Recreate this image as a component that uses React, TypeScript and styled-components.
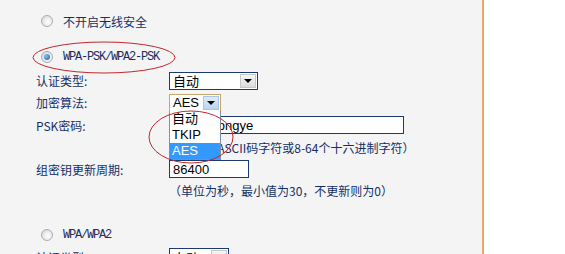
import styled, { createGlobalStyle, css } from "styled-components";

const GlobalStyle = createGlobalStyle`
    html, body {
        margin: 0;
        padding: 0;
        background: #ffffff;
    }
    body {
        font-family: "Noto Sans CJK SC", "Liberation Sans", sans-serif;
        font-size: 12px;
    }
`;

const Page = styled.div`
    width: 565px;
    height: 254px;
    display: flex;
    overflow: hidden;
`;

const Panel = styled.div`
    position: relative;
    width: 484px;
    height: 100%;
    background: #f4f4f4;
    border-right: 2px solid #eaa765;
    padding-top: 10px;
    box-sizing: border-box;
    display: flex;
    flex-direction: column;
`;

const Row = styled.div<{ $h: number; $mt?: number }>`
    height: ${(p) => p.$h}px;
    margin-top: ${(p) => p.$mt ?? 0}px;
    flex: none;
    display: flex;
    align-items: center;
    color: #142f68;
`;

const RadioRow = styled(Row)`
    padding-left: 41px;
    gap: 10px;
`;

const FieldRow = styled(Row)`
    padding-left: 36px;
`;

const Label = styled.div`
    width: 133px;
    flex: none;
    white-space: nowrap;
`;

const Hint = styled.div`
    padding-left: 169px;
    white-space: nowrap;
    color: #142f68;
`;

const Radio = styled.span<{ $checked?: boolean }>`
    width: 12px;
    height: 12px;
    border-radius: 50%;
    box-sizing: border-box;
    border: 1px solid #a9adb3;
    background: radial-gradient(circle at 60% 60%, #ffffff 0%, #e6e8ea 55%, #c9cdd2 100%);
    display: flex;
    align-items: center;
    justify-content: center;
    flex: none;
    ${(p) =>
        p.$checked &&
        css`
            &::after {
                content: "";
                width: 6px;
                height: 6px;
                border-radius: 50%;
                background: radial-gradient(circle at 35% 35%, #8cc0f0, #1a58a6);
            }
        `}
`;

const RadioText = styled.span<{ $latin?: boolean }>`
    white-space: nowrap;
    ${(p) =>
        p.$latin &&
        css`
            font-family: "Liberation Mono", monospace;
            font-size: 12px;
            letter-spacing: -1.2px;
        `}
`;

const Select = styled.div<{ $w: number; $focus?: boolean }>`
    position: relative;
    width: ${(p) => p.$w}px;
    height: 18px;
    box-sizing: border-box;
    border: 1px solid ${(p) => (p.$focus ? "#c9a66e" : "#1c3a6e")};
    background: #ffffff;
    display: flex;
    align-items: center;
    justify-content: space-between;
    padding: 0 1px 0 3px;
    font-family: "Liberation Sans", "Noto Sans CJK SC", sans-serif;
    font-size: 13px;
    color: #000;
`;

const Arrow = styled.span<{ $focus?: boolean }>`
    width: 16px;
    height: 14px;
    box-sizing: border-box;
    border: 1px solid ${(p) => (p.$focus ? "#a9c6e8" : "#c3c7cc")};
    background: ${(p) =>
        p.$focus
            ? "linear-gradient(#dcebfb, #b9d4f2)"
            : "linear-gradient(#f6f6f6, #dcdcdc)"};
    display: flex;
    align-items: center;
    justify-content: center;
    &::after {
        content: "";
        border-left: 4px solid transparent;
        border-right: 4px solid transparent;
        border-top: 4px solid #000;
        margin-top: 1px;
    }
`;

const TextBox = styled.div<{ $w: number }>`
    width: ${(p) => p.$w}px;
    height: 18px;
    box-sizing: border-box;
    border: 1px solid #1c3a6e;
    background: #ffffff;
    padding-left: 3px;
    display: flex;
    align-items: center;
    font-family: "Liberation Sans", sans-serif;
    font-size: 13px;
    color: #000;
    white-space: nowrap;
    overflow: hidden;
`;

const DropList = styled.div`
    position: absolute;
    left: 169px;
    top: 111px;
    width: 52px;
    box-sizing: border-box;
    border: 1px solid #7f8fa6;
    border-top: none;
    background: #ffffff;
    font-family: "Liberation Sans", "Noto Sans CJK SC", sans-serif;
    font-size: 13px;
    z-index: 2;
`;

const DropItem = styled.div<{ $active?: boolean }>`
    height: 16px;
    line-height: 16px;
    padding-left: 2px;
    color: ${(p) => (p.$active ? "#ffffff" : "#000000")};
    background: ${(p) => (p.$active ? "#3399ff" : "transparent")};
`;

const Marks = styled.svg`
    position: absolute;
    left: 0;
    top: 0;
    z-index: 3;
    pointer-events: none;
`;

export default function App() {
    return (
        <>
            <GlobalStyle />
            <Page>
                <Panel>
                    <RadioRow $h={22}>
                        <Radio />
                        <RadioText>不开启无线安全</RadioText>
                    </RadioRow>
                    <RadioRow $h={24} $mt={13}>
                        <Radio $checked />
                        <RadioText $latin>WPA-PSK/WPA2-PSK</RadioText>
                    </RadioRow>
                    <FieldRow $h={23}>
                        <Label>认证类型:</Label>
                        <Select $w={89}>
                            <span>自动</span>
                            <Arrow />
                        </Select>
                    </FieldRow>
                    <FieldRow $h={21}>
                        <Label>加密算法:</Label>
                        <Select $w={52} $focus>
                            <span>AES</span>
                            <Arrow $focus />
                        </Select>
                    </FieldRow>
                    <FieldRow $h={24}>
                        <Label>PSK密码:</Label>
                        <TextBox $w={235}>wangzhongye</TextBox>
                    </FieldRow>
                    <Row $h={20}>
                        <Hint>（8-63个ASCII码字符或8-64个十六进制字符）</Hint>
                    </Row>
                    <FieldRow $h={24}>
                        <Label>组密钥更新周期:</Label>
                        <TextBox $w={80}>86400</TextBox>
                    </FieldRow>
                    <Row $h={18}>
                        <Hint>（单位为秒，最小值为30，不更新则为0）</Hint>
                    </Row>
                    <RadioRow $h={22} $mt={25}>
                        <Radio />
                        <RadioText $latin>WPA/WPA2</RadioText>
                    </RadioRow>
                    <FieldRow $h={22}>
                        <Label>认证类型:</Label>
                        <Select $w={60}>
                            <span>自动</span>
                            <Arrow />
                        </Select>
                    </FieldRow>

                    <DropList>
                        <DropItem>自动</DropItem>
                        <DropItem>TKIP</DropItem>
                        <DropItem $active>AES</DropItem>
                    </DropList>

                    <Marks width="484" height="254" viewBox="0 0 484 254">
                        <ellipse cx="104" cy="57.5" rx="71" ry="15.5" fill="none" stroke="#c2272d" strokeWidth="1" />
                        <ellipse cx="191" cy="137" rx="42" ry="26" fill="none" stroke="#c2272d" strokeWidth="1" />
                    </Marks>
                </Panel>
            </Page>
        </>
    );
}
